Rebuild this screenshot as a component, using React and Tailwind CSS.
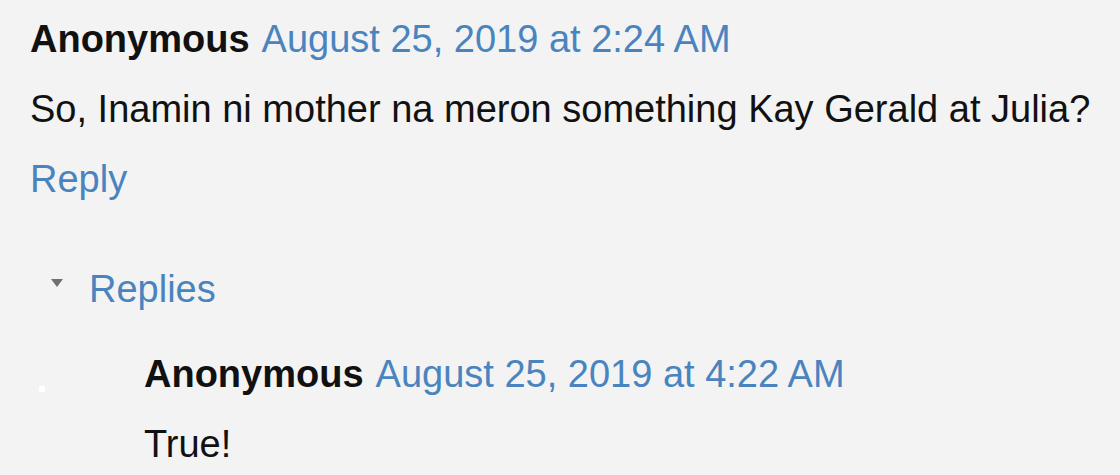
const Comment = ({ author, date, children }) => (
    <div>
        <div className="h-[70px] leading-[70px] whitespace-nowrap">
            <span className="font-bold text-[#111]">{author}</span>
            <a href="#" className="ml-[12px] text-[#4a84bf]">{date}</a>
        </div>
        <div className="h-[70px] leading-[70px] text-[#111] whitespace-nowrap">{children}</div>
    </div>
);

const App = () => {
    return (
        <div className="w-[1120px] h-[475px] overflow-hidden bg-[#f3f3f3] px-[30px] pt-[4px] font-['Liberation_Sans',Arial,sans-serif] text-[38px]">
            <Comment author="Anonymous" date="August 25, 2019 at 2:24 AM">
                So, Inamin ni mother na meron something Kay Gerald at Julia?
            </Comment>
            <div className="h-[70px] leading-[70px]">
                <a href="#" className="text-[#4a84bf]">Reply</a>
            </div>

            <div className="mt-[40px] h-[70px] leading-[70px] flex items-center">
                <span className="ml-[21px] w-0 h-0 border-l-[6px] border-r-[6px] border-t-[8px] border-l-transparent border-r-transparent border-t-[#707070] -mt-[12px]"></span>
                <a href="#" className="ml-[26px] text-[#4a84bf]">Replies</a>
            </div>

            <div className="mt-[15px] flex">
                <div className="w-[114px] shrink-0 pt-[47px] pl-[9px]">
                    <div className="w-[6px] h-[6px] bg-white"></div>
                </div>
                <div className="-mb-[2px]">
                    <Comment author="Anonymous" date="August 25, 2019 at 4:22 AM">
                        True!
                    </Comment>
                </div>
            </div>
        </div>
    );
};

export default App;
